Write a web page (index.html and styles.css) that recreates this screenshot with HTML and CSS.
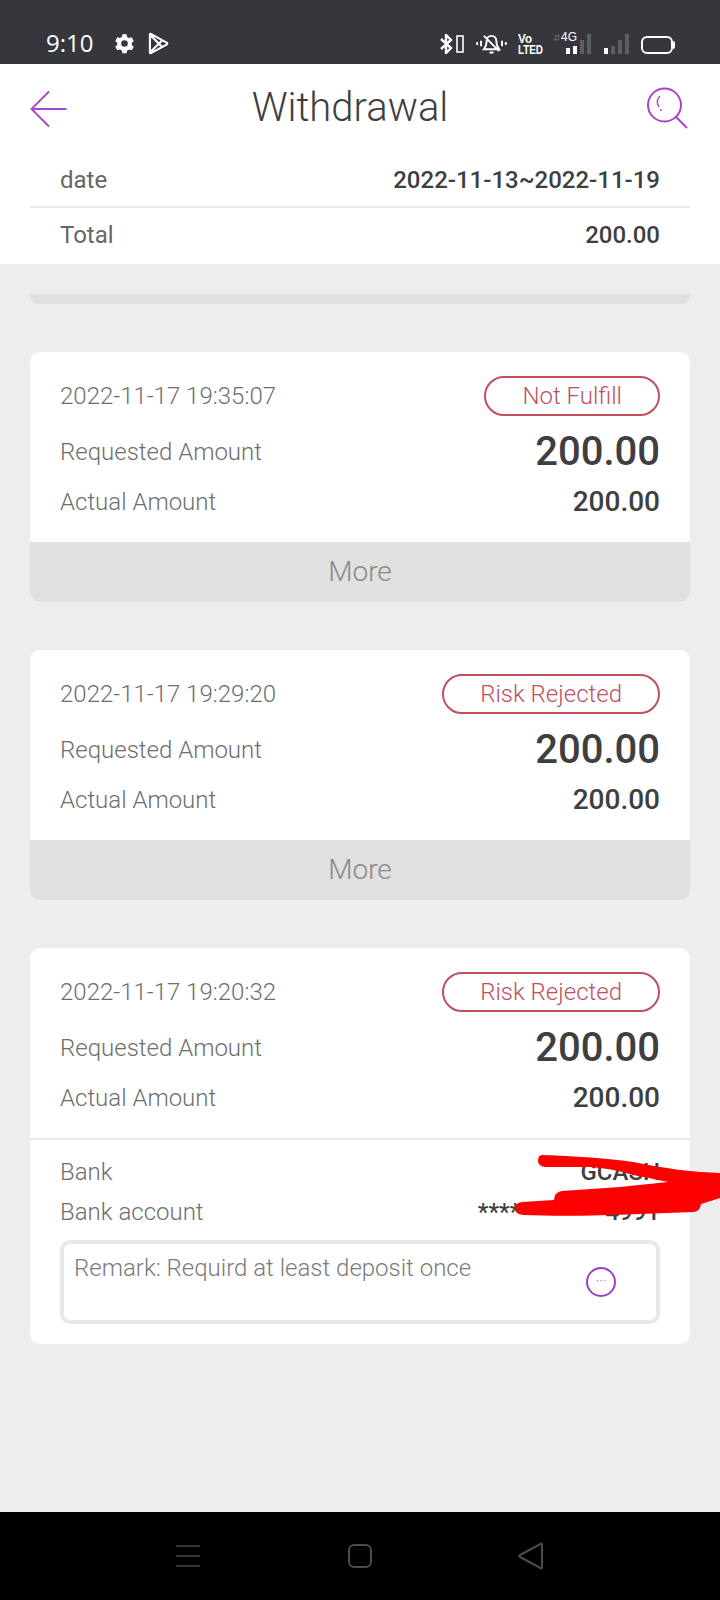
FILE: index.html
```html
<!DOCTYPE html>
<html lang="en">
<head>
<meta charset="utf-8">
<title>Withdrawal</title>
<link rel="stylesheet" href="styles.css">
</head>
<body>
<div class="phone">
  <div class="status">
    <div class="status-left">
      <span class="clock">9:10</span>
      <svg class="ic-gear" viewBox="0 0 24 24"><path fill="#fff" fill-rule="evenodd" d="M9.600 1.500h4.800l.6 3 2.300 1.300 2.900-1 2.400 4.200-2.300 2v2.600l2.300 2-2.400 4.200-2.900-1-2.300 1.300-.6 3H9.600l-.6-3-2.300-1.300-2.900 1-2.400-4.200 2.300-2V11l-2.300-2 2.400-4.200 2.900 1L9 4.500zM12 8.200a3.800 3.800 0 1 0 0 7.600 3.800 3.800 0 0 0 0-7.600z"/></svg>
      <svg class="ic-play" viewBox="0 0 22 24"><path fill="none" stroke="#fff" stroke-width="2.200" stroke-linejoin="round" d="M2 2.500v19q0 1 1 .6l16.500-9q1.500-1 0-2L3 2q-1-.5-1 .5zM2.500 3l12 12.500M2.500 21l12-12"/></svg>
    </div>
    <div class="status-right">
      <svg class="ic-bt" viewBox="0 0 24 20"><path fill="none" stroke="#fff" stroke-width="2.400" d="M1 5l10 9-5 5V1l5 5-10 9"/><rect x="17" y="2" width="6" height="16" fill="none" stroke="#fff" stroke-width="1.600"/></svg>
      <svg class="ic-bell" viewBox="0 0 32 22"><path fill="none" stroke="#fff" stroke-width="2" d="M8 17q3-4 3-9a5 5 0 0 1 10 0q0 5 3 9zM8 3l16 16M14 20.500h4M5 8v6M1 9.500v3M27 8v6M31 9.500v3"/></svg>
      <svg class="volte" viewBox="0 0 25 20"><text x="0" y="9" class="volte-text" textLength="14" lengthAdjust="spacingAndGlyphs">Vo</text><text x="0" y="19.500" class="volte-text" textLength="25" lengthAdjust="spacingAndGlyphs">LTED</text></svg>
      <div class="net">
        <span class="net-arrows">&#8693;</span>
        <span class="net-label">4G</span>
        <div class="bars">
          <i class="b1"></i><i class="b2"></i><i class="b3 dim"></i><i class="b4 dim"></i>
        </div>
      </div>
      <div class="bars second">
        <i class="b1"></i><i class="b2 dim"></i><i class="b3 dim"></i><i class="b4 dim"></i>
      </div>
      <div class="battery"></div>
    </div>
  </div>

  <header class="topbar">
    <svg class="ic-back" viewBox="0 0 38 38"><path fill="none" stroke="#a845cf" stroke-width="1.800" d="M36.500 19H1.500M19 1.500 1.500 19 19 36.500"/></svg>
    <h1 class="title">Withdrawal</h1>
    <svg class="ic-search" viewBox="0 0 42 42"><g fill="none" stroke="#a845cf"><circle cx="18.500" cy="18" r="16.500" stroke-width="2"/><path stroke-width="2" d="m30 30 11 11"/><path stroke-width="1.400" d="M14 9q-5 5-1 11"/></g><circle cx="15" cy="23" r="1" fill="#a845cf"/></svg>
  </header>

  <section class="summary">
    <div class="sum-row first"><span>date</span><b>2022-11-13~2022-11-19</b></div>
    <div class="sum-row last"><span>Total</span><b>200.00</b></div>
  </section>

  <main class="content">
    <div class="strip"></div>

    <article class="card">
      <div class="card-body">
        <div class="line top"><span class="time">2022-11-17 19:35:07</span><span class="pill">Not Fulfill</span></div>
        <div class="line req"><span>Requested Amount</span><b>200.00</b></div>
        <div class="line act"><span>Actual Amount</span><b>200.00</b></div>
      </div>
      <div class="more">More</div>
    </article>

    <article class="card">
      <div class="card-body">
        <div class="line top"><span class="time">2022-11-17 19:29:20</span><span class="pill">Risk Rejected</span></div>
        <div class="line req"><span>Requested Amount</span><b>200.00</b></div>
        <div class="line act"><span>Actual Amount</span><b>200.00</b></div>
      </div>
      <div class="more">More</div>
    </article>

    <article class="card">
      <div class="card-body">
        <div class="line top"><span class="time">2022-11-17 19:20:32</span><span class="pill">Risk Rejected</span></div>
        <div class="line req"><span>Requested Amount</span><b>200.00</b></div>
        <div class="line act"><span>Actual Amount</span><b>200.00</b></div>
      </div>
      <div class="details">
        <div class="line bank"><span>Bank</span><b>GCASH</b></div>
        <div class="line bank"><span>Bank account</span><b>************4991</b></div>
        <div class="remark">
          <span>Remark: Requird at least deposit once</span>
          <span class="dots">&middot;&middot;&middot;</span>
        </div>
      </div>
    </article>
  </main>

  <nav class="navbar">
    <svg class="nav-menu" viewBox="0 0 26 24"><path fill="none" stroke="#4a4a4a" stroke-width="1.600" d="M1 2h24M1 12h24M1 22h24"/></svg>
    <svg class="nav-home" viewBox="0 0 24 24"><rect x="1" y="1" width="22" height="22" rx="5" fill="none" stroke="#4a4a4a" stroke-width="2"/></svg>
    <svg class="nav-back" viewBox="0 0 26 28"><path fill="none" stroke="#4a4a4a" stroke-width="2" stroke-linejoin="round" d="M24 2.500v23q0 1.500-1.500.5L2 15q-1.500-1 0-2L22.500 2q1.500-1 1.500.5z"/></svg>
  </nav>

  <svg class="scribble" viewBox="500 1150 220 70"><path fill="#fe0000" d="M542 1155Q600 1157 633 1162 680 1172 720 1173V1198L701 1204Q700 1211 694 1212L640 1214Q570 1217 523 1215 515 1214 515 1208 515 1203 522 1202L554 1200Q554 1192 562 1191L620 1187 668 1182Q650 1178 633 1175 610 1168 590 1167L545 1167Q538 1166 538 1161 538 1155 542 1155Z"/></svg>
</div>
</body>
</html>
```
FILE: styles.css
```css
* { box-sizing: border-box; }
html, body { margin: 0; padding: 0; }
body { font-family: Roboto, "Liberation Sans", sans-serif; color: #3f3f3f; background: #ededed; }
.phone { position: relative; width: 720px; height: 1600px; overflow: hidden; background: #ededed; display: flex; flex-direction: column; }

.status { height: 64px; background: #36373c; display: flex; justify-content: space-between; align-items: flex-end; padding: 0 45px 10px 46px; color: #fff; flex: none; }
.status-left { display: flex; align-items: center; height: 22px; }
.clock { font-family: "Open Sans", sans-serif; font-size: 24px; width: 49px; line-height: 26px; margin-right: 19px; }
.ic-gear { width: 21px; height: 21px; margin-right: 13px; }
.ic-play { width: 21px; height: 23px; }
.status-right { display: flex; align-items: flex-end; height: 22px; }
.ic-bt { width: 24px; height: 20px; margin-right: 12px; }
.ic-bell { width: 31px; height: 21px; margin-right: 11px; }
.volte { width: 25px; height: 20px; margin-right: 10px; overflow: visible; }
.volte-text { font-family: "Liberation Sans", sans-serif; font-size: 12px; font-weight: 700; fill: #fff; }
.net { position: relative; width: 38px; height: 22px; margin-right: 11px; }
.net-arrows { position: absolute; left: 0; top: 0; font-family: "DejaVu Sans", sans-serif; font-size: 9px; line-height: 12px; color: #6d6e72; }
.net-label { position: absolute; left: 8px; top: -1px; font-family: "Liberation Sans", sans-serif; font-size: 12px; line-height: 12px; color: #fff; }
.bars { display: flex; align-items: flex-end; gap: 3px; height: 20px; }
.net .bars { position: absolute; right: 0; bottom: 0; }
.bars i { display: block; width: 4px; background: #fff; }
.bars i.dim { background: #5d5e62; }
.bars .b1 { height: 6px; }
.bars .b2 { height: 8px; }
.bars .b3 { height: 14px; }
.bars .b4 { height: 20px; }
.bars.second { width: 27px; margin-right: 12px; justify-content: flex-end; }
.battery { position: relative; width: 32px; height: 18px; margin-right: 2px; border: 2px solid #fff; border-radius: 6px; }
.battery::after { content: ""; position: absolute; right: -4px; top: 3px; width: 2px; height: 8px; background: #fff; border-radius: 0 2px 2px 0; }

.topbar { height: 88px; background: #fff; display: flex; align-items: center; justify-content: space-between; padding: 2px 32px 0 30px; position: relative; flex: none; }
.ic-back { width: 38px; height: 38px; }
.ic-search { width: 42px; height: 42px; margin-top: -3px; }
.title { position: absolute; left: 0; right: 20px; top: 19px; margin: 0; text-align: center; font-size: 40px; line-height: 50px; font-weight: 300; color: #3f3f3f; }

.summary { background: #fff; padding: 0 30px; height: 112px; flex: none; }
.sum-row { display: flex; justify-content: space-between; align-items: center; padding: 0 30px; font-size: 24px; color: #666; }
.sum-row.first { height: 56px; padding-top: 2px; border-bottom: 2px solid #e9e9e9; }
.sum-row.last { height: 56px; padding-bottom: 2px; }
.sum-row b { font-weight: 500; color: #3f3f3f; }

.content { flex: 1; padding: 30px 30px 0; display: flex; flex-direction: column; }
.strip { height: 10px; background: #e0e0e0; border-radius: 0 0 8px 8px; margin-bottom: 48px; flex: none; }

.card { background: #fff; border-radius: 10px; overflow: hidden; margin-bottom: 48px; flex: none; }
.card-body { padding: 23px 30px 0; height: 190px; }
.line { display: flex; justify-content: space-between; align-items: center; font-size: 24px; color: #6e6e6e; font-weight: 300; }
.line.top { height: 42px; margin-bottom: 13px; }
.line.req { height: 44px; margin-bottom: 6px; }
.line.act { height: 44px; }
.line b { font-weight: 500; color: #3f3f3f; }
.line.req b { font-size: 40px; margin-top: -2px; }
.line.act b { font-size: 28px; margin-top: -2px; }
.time { color: #6e6e6e; }
.pill { display: block; height: 40px; line-height: 36px; padding: 0 36px; border: 2px solid #c0505f; border-radius: 20px; color: #c0505f; font-weight: 300; }
.more { height: 60px; line-height: 60px; background: #e0e0e0; color: #8a8a8a; font-size: 28px; font-weight: 300; text-align: center; }

.details { border-top: 2px solid #e8e8e8; padding: 12px 30px 20px; }
.line.bank { height: 40px; }
.line.bank b { font-size: 24px; font-weight: 500; }
.remark { display: flex; justify-content: space-between; height: 84px; margin-top: 8px; border: 4px solid #e8e8e8; border-radius: 10px; padding: 10px 40px 0 10px; font-size: 24px; font-weight: 300; color: #7a7a7a; }
.dots { width: 30px; height: 30px; margin-top: 13px; border: 2px solid #a03fc6; border-radius: 50%; color: #a03fc6; font-size: 14px; line-height: 24px; text-align: center; flex: none; }

.navbar { height: 88px; background: #000; position: relative; display: flex; align-items: center; flex: none; padding: 0 0 0 175px; }
.nav-menu { width: 26px; height: 24px; margin-right: 147px; }
.nav-home { width: 24px; height: 24px; margin-right: 146px; }
.nav-back { width: 26px; height: 28px; }

.scribble { position: absolute; left: 500px; top: 1150px; width: 220px; height: 70px; }
```
